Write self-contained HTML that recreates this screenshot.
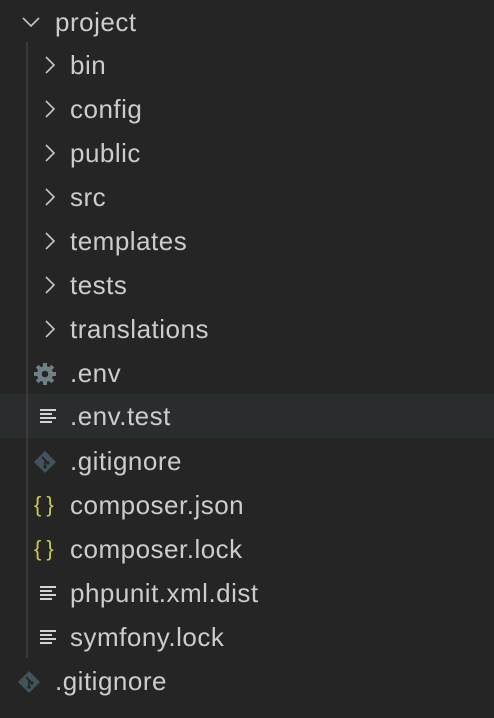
<!DOCTYPE html>
<html><head><style>
body{margin:0;width:494px;height:718px;background:#252526;overflow:hidden;font-family:"Liberation Sans",sans-serif;color:#cccccc;position:relative}
.r{position:absolute;left:0;width:494px;height:44px;line-height:44px;font-size:26px;letter-spacing:0.5px}
.t{position:absolute;top:0}
.hl{background:#2a2d2e}
.guide{position:absolute;left:26px;top:42px;width:2px;height:616px;background:#3a3a3a}
svg{position:absolute}
</style></head><body>
<div class="r" style="top:0"><svg style="left:20px;top:12px" width="22" height="20"><path d="M3 6 L11 14 L19 6" stroke="#c5c5c5" stroke-width="1.6" fill="none"/></svg><span class="t" style="left:55px">project</span></div>
<div class="guide"></div>
<div class="r" style="top:43px"><svg style="left:42px;top:12px" width="16" height="20"><path d="M4 2 L12 10 L4 18" stroke="#c5c5c5" stroke-width="1.6" fill="none"/></svg><span class="t" style="left:70px">bin</span></div>
<div class="r" style="top:87px"><svg style="left:42px;top:12px" width="16" height="20"><path d="M4 2 L12 10 L4 18" stroke="#c5c5c5" stroke-width="1.6" fill="none"/></svg><span class="t" style="left:70px">config</span></div>
<div class="r" style="top:131px"><svg style="left:42px;top:12px" width="16" height="20"><path d="M4 2 L12 10 L4 18" stroke="#c5c5c5" stroke-width="1.6" fill="none"/></svg><span class="t" style="left:70px">public</span></div>
<div class="r" style="top:175px"><svg style="left:42px;top:12px" width="16" height="20"><path d="M4 2 L12 10 L4 18" stroke="#c5c5c5" stroke-width="1.6" fill="none"/></svg><span class="t" style="left:70px">src</span></div>
<div class="r" style="top:219px"><svg style="left:42px;top:12px" width="16" height="20"><path d="M4 2 L12 10 L4 18" stroke="#c5c5c5" stroke-width="1.6" fill="none"/></svg><span class="t" style="left:70px">templates</span></div>
<div class="r" style="top:263px"><svg style="left:42px;top:12px" width="16" height="20"><path d="M4 2 L12 10 L4 18" stroke="#c5c5c5" stroke-width="1.6" fill="none"/></svg><span class="t" style="left:70px">tests</span></div>
<div class="r" style="top:307px"><svg style="left:42px;top:12px" width="16" height="20"><path d="M4 2 L12 10 L4 18" stroke="#c5c5c5" stroke-width="1.6" fill="none"/></svg><span class="t" style="left:70px">translations</span></div>
<div class="r" style="top:351px"><svg style="left:33px;top:11px" width="24" height="24" viewBox="0 0 24 24"><g fill="#6d8086"><circle cx="12" cy="12" r="8"/><g stroke="#6d8086" stroke-width="4"><path d="M12 1v22M1 12h22M4.2 4.2l15.6 15.6M19.8 4.2L4.2 19.8"/></g></g><circle cx="12" cy="12" r="3.3" fill="#252526"/></svg><span class="t" style="left:70px">.env</span></div>
<div class="r hl" style="top:394px"><svg style="left:40px;top:14px" width="18" height="16"><path d="M0 2h16M0 6h12M0 10h16M0 14h12" stroke="#d4d4d4" stroke-width="2"/></svg><span class="t" style="left:70px">.env.test</span><div style="position:absolute;left:26px;top:0;width:2px;height:44px;background:#3a3a3a"></div></div>
<div class="r" style="top:439px"><svg style="left:33px;top:11px" width="24" height="24" viewBox="0 0 24 24"><path d="M12 1L23 12L12 23L1 12Z" fill="#41535b"/><path d="M9 7l6 6M12 10v7" stroke="#252526" stroke-width="1.6" fill="none"/><circle cx="12" cy="17" r="1.6" fill="#252526"/><circle cx="15" cy="13" r="1.6" fill="#252526"/></svg><span class="t" style="left:70px">.gitignore</span></div>
<div class="r" style="top:483px"><span class="t" style="left:34px;color:#cbcb41;font-size:22px;letter-spacing:5px">{}</span><span class="t" style="left:70px">composer.json</span></div>
<div class="r" style="top:527px"><span class="t" style="left:34px;color:#cbcb41;font-size:22px;letter-spacing:5px">{}</span><span class="t" style="left:70px">composer.lock</span></div>
<div class="r" style="top:571px"><svg style="left:40px;top:14px" width="18" height="16"><path d="M0 2h16M0 6h12M0 10h16M0 14h12" stroke="#d4d4d4" stroke-width="2"/></svg><span class="t" style="left:70px">phpunit.xml.dist</span></div>
<div class="r" style="top:615px"><svg style="left:40px;top:14px" width="18" height="16"><path d="M0 2h16M0 6h12M0 10h16M0 14h12" stroke="#d4d4d4" stroke-width="2"/></svg><span class="t" style="left:70px">symfony.lock</span></div>
<div class="r" style="top:659px"><svg style="left:17px;top:11px" width="24" height="24" viewBox="0 0 24 24"><path d="M12 1L23 12L12 23L1 12Z" fill="#41535b"/><path d="M9 7l6 6M12 10v7" stroke="#252526" stroke-width="1.6" fill="none"/><circle cx="12" cy="17" r="1.6" fill="#252526"/><circle cx="15" cy="13" r="1.6" fill="#252526"/></svg><span class="t" style="left:55px">.gitignore</span></div>
</body></html>
